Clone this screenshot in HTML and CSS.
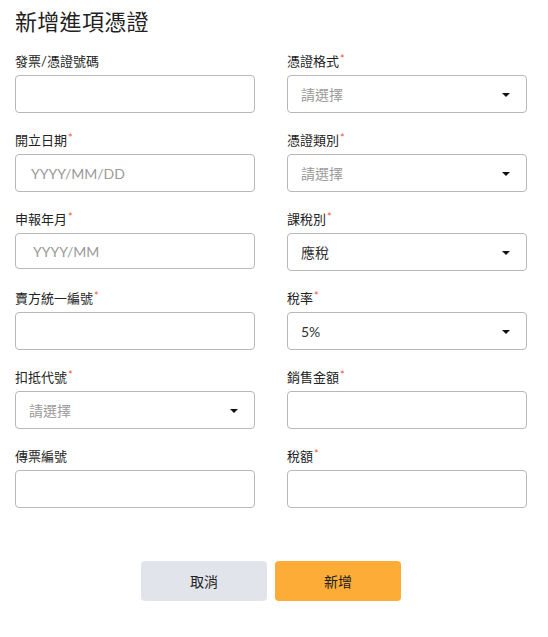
FILE: index.html
```html
<!DOCTYPE html>
<html lang="zh-Hant">
<head>
<meta charset="utf-8">
<link rel="stylesheet" href="styles.css">
</head>
<body>
<div class="page">
  <h1 class="title">新增進項憑證</h1>
  <div class="grid">
    <div class="field">
      <label class="label">發票/憑證號碼</label>
      <div class="box"></div>
    </div>
    <div class="field">
      <label class="label">憑證格式<span class="req">*</span></label>
      <div class="box select"><span class="ph">請選擇</span><span class="caret"></span></div>
    </div>
    <div class="field">
      <label class="label">開立日期<span class="req">*</span></label>
      <div class="box date"><span class="ph">YYYY/MM/DD</span></div>
    </div>
    <div class="field">
      <label class="label">憑證類別<span class="req">*</span></label>
      <div class="box select"><span class="ph">請選擇</span><span class="caret"></span></div>
    </div>
    <div class="field">
      <label class="label">申報年月<span class="req">*</span></label>
      <div class="box date short"><span class="ph">YYYY/MM</span></div>
    </div>
    <div class="field">
      <label class="label">課稅別<span class="req">*</span></label>
      <div class="box select"><span class="val">應稅</span><span class="caret"></span></div>
    </div>
    <div class="field">
      <label class="label">賣方統一編號<span class="req">*</span></label>
      <div class="box"></div>
    </div>
    <div class="field">
      <label class="label">稅率<span class="req">*</span></label>
      <div class="box select"><span class="val">5%</span><span class="caret"></span></div>
    </div>
    <div class="field">
      <label class="label">扣抵代號<span class="req">*</span></label>
      <div class="box select"><span class="ph">請選擇</span><span class="caret"></span></div>
    </div>
    <div class="field">
      <label class="label">銷售金額<span class="req">*</span></label>
      <div class="box"></div>
    </div>
    <div class="field">
      <label class="label">傳票編號</label>
      <div class="box"></div>
    </div>
    <div class="field">
      <label class="label">稅額<span class="req">*</span></label>
      <div class="box"></div>
    </div>
  </div>
  <div class="actions">
    <button class="btn cancel">取消</button>
    <button class="btn submit">新增</button>
  </div>
</div>
</body>
</html>
```

FILE: styles.css
```css
* { box-sizing: border-box; }
html, body { margin: 0; padding: 0; background: #fff; }
body {
  font-family: Lato, "Noto Sans CJK TC", sans-serif;
  color: #222;
}
.page {
  width: 542px;
  padding: 6px 15px 0 15px;
}
.title {
  margin: 0;
  font-size: 22px;
  font-weight: 400;
  line-height: 32px;
  color: #222;
  letter-spacing: 0.3px;
}
.grid {
  margin-top: 14px;
  display: grid;
  grid-template-columns: 240px 240px;
  column-gap: 32px;
  row-gap: 18px;
}
.field {
  display: flex;
  flex-direction: column;
}
.label {
  font-size: 13px;
  line-height: 18px;
  color: #222;
  margin-bottom: 5px;
}
.req {
  color: #f5553b;
  font-size: 11px;
  vertical-align: top;
  line-height: 14px;
  margin-left: 1px;
}
.box {
  height: 38px;
  border: 1px solid #b8b8b8;
  border-radius: 4px;
  display: flex;
  align-items: center;
  padding: 0 16px 0 13px;
  font-size: 14px;
}
.box.date { padding-left: 15px; }
.box.date.short { padding-left: 17px; height: 36px; }
.ph { color: #9a9a9a; }
.val { color: #333; }
.select { justify-content: space-between; }
.caret {
  width: 0;
  height: 0;
  border-left: 4px solid transparent;
  border-right: 4px solid transparent;
  border-top: 4px solid #111;
  margin-top: 1px;
}
.actions {
  margin-top: 53px;
  display: flex;
  justify-content: center;
  gap: 8px;
}
.btn {
  width: 126px;
  height: 40px;
  border: none;
  border-radius: 4px;
  font-family: Lato, "Noto Sans CJK TC", sans-serif;
  font-size: 14px;
  color: #222;
}
.cancel { background: #e1e4eb; }
.submit { background: #fdac37; }
```
